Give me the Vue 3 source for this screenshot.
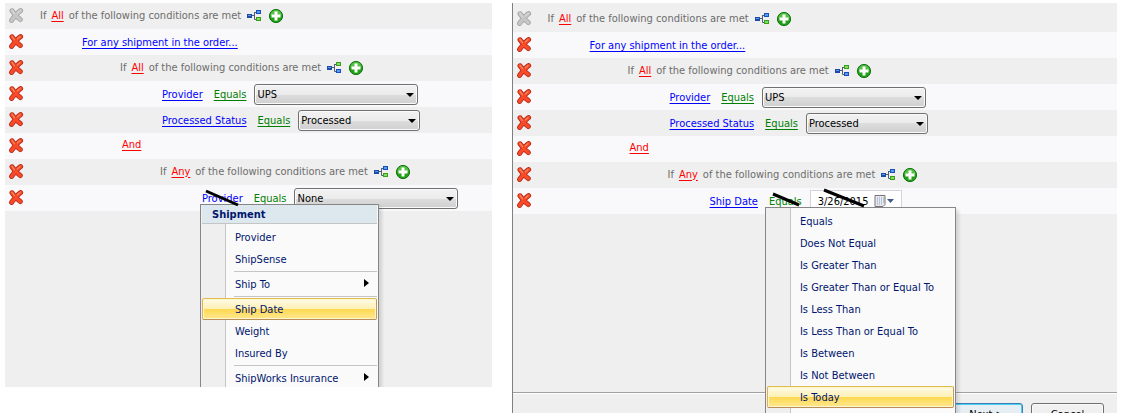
<template>
  <main class="stage">
    <section v-for="panel in panels" :key="panel.id" class="panel" :class="panel.id">
      <div class="rows">
        <div v-for="(row, i) in panel.rows" :key="i" class="row" :class="row.type">
          <button class="icon-btn" type="button" aria-label="Remove" :disabled="row.root">
            <svg width="16" height="16" viewBox="0 0 16 16">
              <g fill="none" stroke-linecap="round" stroke-linejoin="round">
                <path
                  d="M4 2.800C5.200 5 8.200 8.600 12.300 11.600M12.600 2.600C9 5 6.400 8.600 3.600 12.400"
                  :stroke="row.root ? '#a4a4a4' : '#b52a18'"
                  stroke-width="5"
                />
                <path
                  d="M4 2.800C5.200 5 8.200 8.600 12.300 11.600M12.600 2.600C9 5 6.400 8.600 3.600 12.400"
                  :stroke="row.root ? '#c6c6c6' : '#f84a28'"
                  stroke-width="3.4"
                />
                <path
                  d="M4 2.400L6.500 5.600M12 2.600L9.500 4.800"
                  :stroke="row.root ? '#d8d8d8' : '#ff8a62'"
                  stroke-width="1.2"
                />
              </g>
            </svg>
          </button>

          <div class="content" :style="{ marginLeft: row.indent * 40 + 'px' }">
            <template v-if="row.type === 'group'">
              <span>If</span>
              <a href="#" class="join">{{ row.join }}</a>
              <span>of the following conditions are met</span>
              <button class="icon-btn branch" type="button" aria-label="Add group">
                <svg width="16" height="14" viewBox="0 0 16 14">
                  <path d="M5 6.500h3.500M8.500 3v7.500M8.500 3.500h2M8.500 10.500h2" fill="none" stroke="#4f5f78" />
                  <rect x="1" y="5" width="5" height="4" fill="#1c4ba6" />
                  <rect x="2" y="6" width="3" height="1" fill="#5f96e6" />
                  <rect x="10" y="1" width="5" height="4" :fill="row.flip ? '#35a01e' : '#1550bd'" />
                  <rect x="11" y="2" width="3" height="2" :fill="row.flip ? '#86dc5c' : '#5c9af0'" />
                  <rect x="10" y="8" width="5" height="4" :fill="row.flip ? '#1550bd' : '#35a01e'" />
                  <rect x="11" y="9" width="3" height="2" :fill="row.flip ? '#5c9af0' : '#86dc5c'" />
                </svg>
              </button>
              <button class="icon-btn" type="button" aria-label="Add condition">
                <svg width="16" height="16" viewBox="0 0 16 16">
                  <circle cx="8" cy="8" r="6.600" fill="#20a016" stroke="#127512" stroke-width="1" />
                  <path d="M2.500 7.500a5.500 5.500 0 0 1 11 0c-3 1-7 1-11 0z" fill="#58bf48" />
                  <path d="M6.500 3.500h3v3h3v3h-3v3h-3v-3h-3v-3h3z" fill="#fff" />
                </svg>
              </button>
            </template>

            <a v-else-if="row.type === 'scope'" href="#" class="field">For any shipment in the order...</a>
            <a v-else-if="row.type === 'and'" href="#" class="join">And</a>

            <template v-else>
              <span class="term">
                <a href="#" class="field">{{ row.field }}</a>
                <svg v-if="row.strike === 'field'" class="strike" width="36" height="18" viewBox="0 0 36 18">
                  <path d="M2 1L34 15" />
                </svg>
                <ul v-if="row.menu === 'field'" class="menu field-menu">
                  <li class="menu-title">Shipment</li>
                  <li
                    v-for="item in fieldMenu"
                    :key="item.label"
                    :class="{ active: item.active, divided: item.divided }"
                  >
                    <button type="button">{{ item.label }}</button>
                    <svg v-if="item.sub" class="sub" width="5" height="8" viewBox="0 0 5 8">
                      <path d="M0 0l5 4-5 4z" />
                    </svg>
                  </li>
                </ul>
              </span>
              <span class="term">
                <a href="#" class="operator">Equals</a>
                <svg v-if="row.strike === 'operator'" class="strike" width="30" height="16" viewBox="0 0 30 16">
                  <path d="M2 1L28 12" />
                </svg>
                <ul v-if="row.menu === 'operator'" class="menu operator-menu">
                  <li v-for="item in operatorMenu" :key="item" :class="{ active: item === 'Is Today' }">
                    <button type="button">{{ item }}</button>
                  </li>
                </ul>
              </span>
              <span v-if="row.date" class="date">
                <input type="text" :value="row.date" aria-label="Date" />
                <svg class="strike" width="44" height="20" viewBox="0 0 44 20">
                  <path d="M2 1L42 17" />
                </svg>
                <button class="icon-btn" type="button" aria-label="Open calendar">
                  <svg width="22" height="14" viewBox="0 0 22 14">
                    <path d="M1 1.500h10v9l-2 2H1z" fill="#e8ebf2" stroke="#7b7072" />
                    <path d="M3 4h7M3 6h7M3 8h7M3 10h5" stroke="#8d9bb8" stroke-dasharray="1 1" />
                    <path d="M13 5h7l-3.500 4z" fill="#3e5c8c" />
                  </svg>
                </button>
              </span>
              <span v-else class="combo">
                <select :class="{ short: row.short }" :aria-label="row.field">
                  <option>{{ row.value }}</option>
                </select>
                <svg width="8" height="4" viewBox="0 0 8 4"><path d="M0 0h8L4 4z" /></svg>
              </span>
            </template>
          </div>
        </div>
      </div>

      <footer v-if="panel.id === 'wizard'" class="footer">
        <button class="next" type="button">Next &gt;</button>
        <button type="button">Cancel</button>
      </footer>
    </section>
  </main>
</template>

<script setup>
const baseRows = [
  { type: 'group', indent: 0, join: 'All', root: true },
  { type: 'scope', indent: 1 },
  { type: 'group', indent: 2, join: 'All', flip: true },
  { type: 'condition', indent: 3, field: 'Provider', value: 'UPS' },
  { type: 'condition', indent: 3, field: 'Processed Status', value: 'Processed', short: true },
  { type: 'and', indent: 2 },
  { type: 'group', indent: 3, join: 'Any' },
];

const panels = [
  {
    id: 'editor',
    rows: [
      ...baseRows,
      { type: 'condition', indent: 4, field: 'Provider', value: 'None', strike: 'field', menu: 'field' },
    ],
  },
  {
    id: 'wizard',
    rows: [
      ...baseRows,
      {
        type: 'condition',
        indent: 4,
        field: 'Ship Date',
        date: '3/26/2015',
        strike: 'operator',
        menu: 'operator',
      },
    ],
  },
];

const fieldMenu = [
  { label: 'Provider' },
  { label: 'ShipSense' },
  { label: 'Ship To', sub: true, divided: true },
  { label: 'Ship Date', active: true, divided: true },
  { label: 'Weight' },
  { label: 'Insured By' },
  { label: 'ShipWorks Insurance', sub: true, divided: true },
];

const operatorMenu = [
  'Equals',
  'Does Not Equal',
  'Is Greater Than',
  'Is Greater Than or Equal To',
  'Is Less Than',
  'Is Less Than or Equal To',
  'Is Between',
  'Is Not Between',
  'Is Today',
];
</script>

<style>
body {
  background: #fff;
}
</style>

<style scoped>
.stage {
  display: flex;
  gap: 20px;
  box-sizing: border-box;
  height: 100vh;
  padding: 3px 4px 3px 5px;
  font-family: 'DejaVu Sans Condensed', 'DejaVu Sans', sans-serif;
  font-size: 11px;
  line-height: 14px;
  color: #6d6d6d;
}

.stage button,
.stage input,
.stage select {
  font: inherit;
}

.panel {
  display: flex;
  flex-direction: column;
  box-sizing: border-box;
  min-width: 0;
  overflow: hidden;
  background: #efefef;
}

.editor {
  flex: 487 1 0;
  margin-bottom: 26px;
}

.wizard {
  flex: 605 1 0;
  padding-top: 3px;
  border-left: 1px solid #808080;
}

.row {
  display: flex;
  align-items: center;
  height: 26px;
  padding-left: 3px;
  white-space: nowrap;
}

.row:nth-child(even) {
  background: #f9f9fb;
}

.icon-btn {
  display: flex;
  padding: 0;
  border: 0;
  background: none;
}

.content {
  display: flex;
  align-items: center;
  gap: 11px;
  padding: 2px 0 0 18px;
}

.group .content {
  gap: 5px;
  padding: 0 0 0 16px;
}

.and .content {
  padding-top: 0;
  padding-bottom: 2px;
}

.group .content > span,
.group .content > a {
  padding-bottom: 1px;
}

.branch {
  margin-right: 1px;
}

a {
  text-underline-offset: 2px;
}

.join {
  color: #f00;
}

.field {
  color: #00f;
}

.operator {
  color: #008000;
}

.term,
.combo,
.date {
  position: relative;
  display: flex;
}

.combo,
.date {
  margin: -2px 0 0 -3px;
}

.combo select {
  appearance: none;
  box-sizing: border-box;
  width: 164px;
  height: 21px;
  margin: 0;
  padding: 1px 16px 0 2px;
  border: 1px solid #707070;
  border-radius: 3px;
  background: linear-gradient(#f2f2f2, #ebebeb 50%, #dddddd 50%, #cfcfcf);
  box-shadow: inset 0 0 0 1px #fafafa;
  color: #000;
}

.combo select.short {
  width: 122px;
}

.combo svg {
  position: absolute;
  top: 9px;
  right: 4px;
  pointer-events: none;
}

.strike {
  position: absolute;
  top: -2px;
  left: 2px;
  z-index: 3;
  overflow: visible;
  fill: none;
  stroke: #000;
  stroke-width: 3;
  pointer-events: none;
}

.date {
  align-items: center;
  box-sizing: border-box;
  width: 92px;
  height: 22px;
  border: 1px solid #d4d4dc;
  background: #fff;
}

.date input {
  width: 56px;
  padding: 2px 0 0 7px;
  border: 0;
  outline: 0;
  background: none;
  color: #000;
}

.date .strike {
  left: 11px;
}

.menu {
  position: absolute;
  top: 12px;
  left: -2px;
  z-index: 2;
  box-sizing: border-box;
  margin: 0;
  padding: 2px 1px;
  border: 1px solid #868686;
  background: linear-gradient(90deg, #efefef 24px, #c5c5c5 24px, #c5c5c5 25px, #fafafa 25px);
  box-shadow: 3px 3px 3px rgba(0, 0, 0, 0.12);
  list-style: none;
  color: #00156e;
}

.field-menu {
  width: 179px;
  padding-top: 0;
}

.operator-menu {
  left: -4px;
  width: 191px;
}

.menu-title {
  height: 18px;
  margin-bottom: 2px;
  padding-left: 10px;
  border-bottom: 1px solid #c5c5c5;
  background: #dde7ee;
  font-size: 11px;
  font-weight: bold;
  line-height: 20px;
}

.menu li {
  position: relative;
}

.menu button {
  display: block;
  box-sizing: border-box;
  width: 100%;
  height: 22px;
  padding: 2px 0 0 32px;
  border: 1px solid transparent;
  border-radius: 2px;
  background: none;
  text-align: left;
  color: inherit;
}

.menu .active button {
  border-color: #e0bb4e #c29b5c #b98e55 #d9b25a;
  background: linear-gradient(#fffbe6, #fff0b4 50%, #ffd851 50%, #ffe78e);
  box-shadow: inset 0 0 0 1px #fff6cf;
}

.menu .divided {
  padding-top: 3px;
}

.menu .divided::before {
  content: '';
  position: absolute;
  top: 1px;
  left: 32px;
  right: 0;
  height: 1px;
  background: #c5c5c5;
}

.sub {
  position: absolute;
  right: 8px;
  bottom: 8px;
}

.operator-menu::after {
  content: '';
  display: block;
  height: 22px;
}

.footer {
  display: flex;
  flex: none;
  justify-content: flex-end;
  gap: 8px;
  box-sizing: border-box;
  height: 21px;
  margin-top: auto;
  padding: 10px 13px 0 0;
  border-top: 1px solid #a0a0a0;
  box-shadow: inset 0 1px #fff;
}

.footer button {
  flex: none;
  box-sizing: border-box;
  width: 73px;
  height: 23px;
  padding: 0;
  border: 1px solid #707070;
  border-radius: 3px;
  background: linear-gradient(#f2f2f2, #ebebeb);
  box-shadow: inset 0 0 0 1px #fafafa;
  color: #000;
}

.footer .next {
  border-color: #3c7fb1;
  background: #e7eff4;
  box-shadow: inset 0 0 0 1px #48d1f5;
}
</style>
